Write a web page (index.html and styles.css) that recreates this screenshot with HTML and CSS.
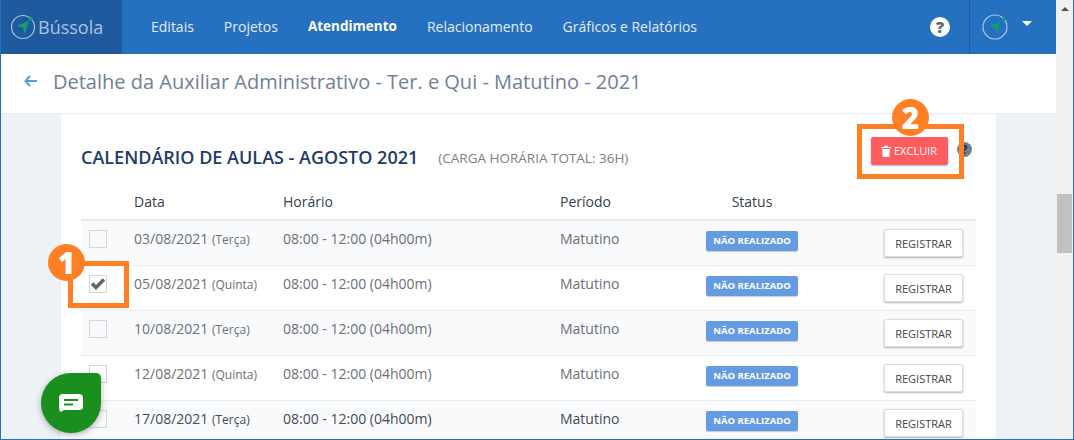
FILE: index.html
```html
<!DOCTYPE html>
<html lang="en">
<head>
  <meta charset="UTF-8">
  <title>Bússola - Calendário de Aulas</title>
  <link rel="stylesheet" href="styles.css">
</head>
<body>
  <div class="window">
    <div class="page">
      <header class="topbar">
        <div class="brand">
          <svg class="compass" width="26" height="26" viewBox="0 0 26 26">
            <circle cx="13" cy="13" r="11.5" fill="none" stroke="#a9c4e2" stroke-width="1.2"/>
            <path d="M7 12 L19 7 L14.5 20 L13 13.5 Z" fill="#0fa36b"/>
            <circle cx="21" cy="5" r="2" fill="#0fa36b"/>
          </svg>
          <span class="brand-name">Bússola</span>
        </div>
        <nav class="nav">
          <a>Editais</a>
          <a>Projetos</a>
          <a class="active">Atendimento</a>
          <a>Relacionamento</a>
          <a>Gráficos e Relatórios</a>
        </nav>
        <div class="help">?</div>
        <div class="user">
          <svg class="compass" width="26" height="26" viewBox="0 0 26 26">
            <circle cx="13" cy="13" r="12" fill="none" stroke="#a9c4e2" stroke-width="1.2"/>
            <path d="M7 12 L18 8 L14.5 19.5 L13 13.5 Z" fill="#0fa36b"/>
            <circle cx="22" cy="5" r="1.8" fill="#0fa36b"/>
          </svg>
          <span class="caret"></span>
        </div>
      </header>

      <div class="page-head">
        <svg class="back" width="14" height="12" viewBox="0 0 14 12">
          <path d="M6 1 L1.5 6 L6 11 M2 6 H13" fill="none" stroke="#5b9bd8" stroke-width="2"/>
        </svg>
        <h1>Detalhe da Auxiliar Administrativo - Ter. e Qui - Matutino - 2021</h1>
      </div>

      <main class="content">
        <section class="card">
          <div class="card-head">
            <h2>CALENDÁRIO DE AULAS - AGOSTO 2021</h2>
            <span class="hours">(CARGA HORÁRIA TOTAL: 36H)</span>
            <button class="btn-delete">
              <svg width="10" height="12" viewBox="0 0 10 12">
                <path d="M0 2 H3 L3.5 0.5 H6.5 L7 2 H10 V3 H0 Z M1 4 H9 L8.4 12 H1.6 Z" fill="#fff"/>
              </svg>
              EXCLUIR
            </button>
            <span class="card-help">?</span>
          </div>

          <div class="table">
            <div class="row row-head">
              <span></span>
              <span>Data</span>
              <span>Horário</span>
              <span>Período</span>
              <span class="col-status">Status</span>
              <span></span>
            </div>
            <div class="row">
              <span class="check"></span>
              <span>03/08/2021 <small>(Terça)</small></span>
              <span>08:00 - 12:00 (04h00m)</span>
              <span>Matutino</span>
              <span class="col-status"><b class="badge">NÃO REALIZADO</b></span>
              <span class="col-action"><button class="btn-register">REGISTRAR</button></span>
            </div>
            <div class="row">
              <span class="check">
                <svg width="14" height="12" viewBox="0 0 14 12"><path d="M1 5.5 L5 9.5 L13 1.5" fill="none" stroke="#666" stroke-width="3.6"/></svg>
              </span>
              <span>05/08/2021 <small>(Quinta)</small></span>
              <span>08:00 - 12:00 (04h00m)</span>
              <span>Matutino</span>
              <span class="col-status"><b class="badge">NÃO REALIZADO</b></span>
              <span class="col-action"><button class="btn-register">REGISTRAR</button></span>
            </div>
            <div class="row">
              <span class="check"></span>
              <span>10/08/2021 <small>(Terça)</small></span>
              <span>08:00 - 12:00 (04h00m)</span>
              <span>Matutino</span>
              <span class="col-status"><b class="badge">NÃO REALIZADO</b></span>
              <span class="col-action"><button class="btn-register">REGISTRAR</button></span>
            </div>
            <div class="row">
              <span class="check"></span>
              <span>12/08/2021 <small>(Quinta)</small></span>
              <span>08:00 - 12:00 (04h00m)</span>
              <span>Matutino</span>
              <span class="col-status"><b class="badge">NÃO REALIZADO</b></span>
              <span class="col-action"><button class="btn-register">REGISTRAR</button></span>
            </div>
            <div class="row row-dark">
              <span class="check"></span>
              <span>17/08/2021 <small>(Terça)</small></span>
              <span>08:00 - 12:00 (04h00m)</span>
              <span>Matutino</span>
              <span class="col-status"><b class="badge">NÃO REALIZADO</b></span>
              <span class="col-action"><button class="btn-register">REGISTRAR</button></span>
            </div>
          </div>
        </section>
      </main>
    </div>

    <aside class="scrollbar">
      <span class="scroll-up"></span>
      <span class="scroll-thumb"></span>
    </aside>

    <!-- tutorial annotations over the page -->
    <div class="mark mark-check"></div>
    <div class="mark mark-delete"></div>
    <div class="step step-1">1</div>
    <div class="step step-2">2</div>

    <div class="chat">
      <svg width="24" height="18" viewBox="0 0 24 18">
        <path d="M4 0 H20 Q24 0 24 4 V13 Q24 16 20 16 H5 L1.5 18 Q0 16 0 13 V4 Q0 0 4 0 Z" fill="#fff"/>
        <path d="M5 6 H19 M5 10.5 H14" stroke="#1b8f1e" stroke-width="2"/>
      </svg>
    </div>
  </div>
</body>
</html>
```

FILE: styles.css
```css
html, body {
  margin: 0;
  padding: 0;
  height: 100%;
  overflow: hidden;
}

body {
  font-family: "Open Sans", "Liberation Sans", sans-serif;
  color: #6b6f76;
}

.window {
  position: relative;
  display: flex;
  box-sizing: border-box;
  height: 440px;
  overflow: hidden;
  border: 1px solid #2670c0;
  border-width: 0 1px 1px 1px;
  background-color: #eef1f6;
}

.page {
  flex: 1;
  min-width: 0;
}

/* Top bar */
.topbar {
  display: flex;
  align-items: center;
  height: 54px;
  background-color: #2670c0;
  color: #fff;
}

.brand {
  display: flex;
  align-items: center;
  box-sizing: border-box;
  width: 121px;
  height: 54px;
  padding-left: 9px;
  background-color: #1f5a9e;
}

.brand-name {
  margin-left: 2px;
  font-size: 18px;
  color: #a9c4e2;
}

.nav {
  display: flex;
  flex: 1;
  gap: 30px;
  margin: -2px 0 0 29px;
  font-size: 14px;
  color: #e3ecf6;
}

.nav .active {
  font-size: 13.5px;
  font-weight: bold;
  color: #fff;
}

.help {
  width: 20px;
  height: 20px;
  margin-right: 19px;
  border-radius: 50%;
  background-color: #fff;
  color: #666;
  font-size: 16px;
  font-weight: 800;
  line-height: 20px;
  text-align: center;
}

.user {
  display: flex;
  align-items: center;
  box-sizing: border-box;
  width: 87px;
  height: 54px;
  padding-left: 12px;
  border-left: 1px solid #1f5a9e;
}

.caret {
  width: 0;
  height: 0;
  margin: -8px 0 0 14px;
  border: 5px solid transparent;
  border-top-color: #fff;
  border-bottom-width: 0;
}

/* Page heading */
.page-head {
  display: flex;
  align-items: center;
  box-sizing: border-box;
  height: 59px;
  padding: 0 0 5px 23px;
  background-color: #fff;
}

h1 {
  margin: 0 0 0 15px;
  font-size: 20px;
  font-weight: normal;
  color: #718096;
}

/* Calendar card */
.content {
  padding: 0 60px;
  border-top: 1px solid #e8ecef;
}

.card {
  box-sizing: border-box;
  height: 330px;
  padding: 0 20px;
  background-color: #fff;
}

.card-head {
  display: flex;
  align-items: center;
  height: 76px;
  position: relative;
}

h2 {
  margin: 10px 0 0;
  font-size: 18px;
  font-weight: 600;
  color: #1f3b66;
  white-space: nowrap;
}

.hours {
  margin: 11px 0 0 20px;
  font-size: 13.5px;
  color: #7a7f86;
  white-space: nowrap;
}

.btn-delete {
  display: flex;
  align-items: center;
  gap: 3px;
  margin: -3px 28px 0 auto;
  height: 28px;
  width: 77px;
  padding: 0 0 0 10px;
  border: none;
  border-radius: 2px;
  background-color: #ff5c60;
  box-shadow: 0 1px 2px rgba(0, 0, 0, 0.3);
  color: #fff;
  font-family: inherit;
  font-size: 11px;
  white-space: nowrap;
}

.card-help {
  position: absolute;
  right: 4px;
  top: 28px;
  width: 15px;
  height: 15px;
  border-radius: 50%;
  background-color: #6b7f95;
  color: #333;
  font-size: 12px;
  font-weight: 800;
  line-height: 15px;
  text-align: center;
}

.table {
  font-size: 14px;
}

.row {
  display: grid;
  grid-template-columns: 53px 149px 277px 130px 124px 1fr;
  align-items: start;
  height: 45px;
  box-sizing: border-box;
  padding-top: 8px;
  border-bottom: 1px solid #e8ecef;
  background-color: #fff;
}

.row:nth-child(even) {
  background-color: #f9fafc;
}

.row-head {
  align-items: center;
  height: 31px;
  padding: 0 0 7px;
  border-bottom: 2px solid #e6e9ee;
  color: #333f4d;
  background-color: #fff;
}

.row-dark {
  color: #444b55;
}

small {
  font-size: 12px;
}

.check {
  display: flex;
  align-items: center;
  justify-content: center;
  box-sizing: border-box;
  width: 18px;
  height: 18px;
  margin: 1px 0 0 8px;
  border: 1px solid #d4d6d9;
}

.col-status {
  text-align: center;
}

.badge {
  display: inline-block;
  width: 92px;
  height: 20px;
  margin-top: 2px;
  border-radius: 2px;
  background-color: #659be3;
  box-shadow: 0 1px 1px rgba(0, 0, 0, 0.2);
  color: #fff;
  font-size: 9.5px;
  line-height: 19px;
  vertical-align: top;
}

.col-action {
  padding-right: 13px;
  text-align: right;
}

.btn-register {
  width: 79px;
  height: 28px;
  padding: 0;
  border: 1px solid #ddd;
  border-radius: 2px;
  background-color: #fff;
  box-shadow: 0 1px 2px rgba(0, 0, 0, 0.3);
  color: #444;
  font-family: inherit;
  font-size: 11px;
  vertical-align: top;
}

/* Scrollbar */
.scrollbar {
  position: relative;
  flex: none;
  width: 17px;
  background-color: #f1f1f1;
}

.scroll-up {
  position: absolute;
  left: 5px;
  top: 7px;
  border: 4px solid transparent;
  border-bottom-color: #505050;
  border-top-width: 0;
}

.scroll-thumb {
  position: absolute;
  left: 1px;
  top: 194px;
  width: 15px;
  height: 59px;
  background-color: #c1c1c1;
}

/* Annotations */
.mark {
  position: absolute;
  box-sizing: border-box;
  border: 5px solid #ff7f24;
}

.mark-check {
  left: 67px;
  top: 261px;
  width: 61px;
  height: 47px;
}

.mark-delete {
  left: 856px;
  top: 124px;
  width: 107px;
  height: 55px;
}

.step {
  position: absolute;
  width: 37px;
  height: 37px;
  border-radius: 50%;
  background-color: #ff7f24;
  color: #fff;
  font-size: 30px;
  font-weight: 800;
  line-height: 37px;
  text-align: center;
}

.step-1 {
  left: 47px;
  top: 244px;
}

.step-2 {
  left: 891px;
  top: 99px;
}

.chat {
  position: absolute;
  left: 40px;
  top: 373px;
  display: flex;
  align-items: center;
  justify-content: center;
  width: 60px;
  height: 60px;
  border-radius: 50% 5px 50% 50%;
  background-color: #1b8f1e;
  box-shadow: 0 2px 6px rgba(0, 0, 0, 0.3);
}
```
